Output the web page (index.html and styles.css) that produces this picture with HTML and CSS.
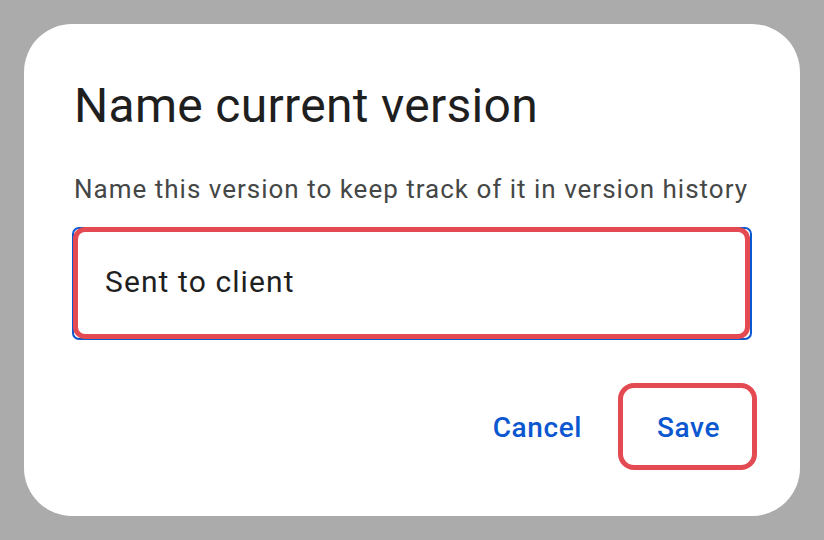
FILE: index.html
```html
<!DOCTYPE html>
<html lang="en">
<head>
<meta charset="utf-8">
<title>Name current version</title>
<link rel="stylesheet" href="styles.css">
</head>
<body>
  <div class="dialog">
    <h1 class="title">Name current version</h1>
    <p class="subtitle">Name this version to keep track of it in version history</p>
    <div class="field">
      <div class="field-value">Sent to client</div>
      <span class="mark mark-field"></span>
    </div>
    <div class="actions">
      <button class="btn">Cancel</button>
      <button class="btn btn-save">Save<span class="mark mark-save"></span></button>
    </div>
  </div>
</body>
</html>
```

FILE: styles.css
```css
* { box-sizing: border-box; }
html, body { margin: 0; padding: 0; }
body {
  width: 824px;
  height: 540px;
  background: #ababab;
  padding: 24px;
  font-family: Roboto, "Liberation Sans", sans-serif;
}
.dialog {
  width: 776px;
  height: 492px;
  background: #ffffff;
  border-radius: 48px;
  padding: 56px 48px 0 48px;
  display: flex;
  flex-direction: column;
}
.title {
  margin: 0;
  font-size: 48px;
  line-height: 52px;
  font-weight: 400;
  letter-spacing: 0.3px;
  color: #1f1f1f;
  padding-left: 2px;
}
.subtitle {
  margin: 41px 0 0 0;
  font-size: 26px;
  line-height: 32px;
  letter-spacing: 1px;
  color: #444746;
  padding-left: 2px;
  white-space: nowrap;
}
.field {
  position: relative;
  margin-top: 22px;
  height: 113px;
  border: 2px solid #0b57d0;
  border-radius: 7px;
  display: flex;
  align-items: center;
  padding-left: 31px;
}
.field-value {
  font-size: 30px;
  letter-spacing: 1.1px;
  color: #1f1f1f;
  margin-top: -4px;
}
.mark {
  position: absolute;
  border: 5px solid #e34a52;
  pointer-events: none;
}
.mark-field {
  left: -1px;
  right: 0;
  top: -2px;
  bottom: -1px;
  border-radius: 12px;
}
.actions {
  margin-top: 47px;
  display: flex;
  justify-content: flex-end;
  gap: 5px;
}
.btn {
  position: relative;
  height: 80px;
  padding: 0 34px;
  border: none;
  background: transparent;
  font-family: Roboto, "Liberation Sans", sans-serif;
  font-size: 28px;
  font-weight: 500;
  letter-spacing: 0.6px;
  color: #0b57d0;
}
.btn-save {
  padding: 0 32px 0 36px;
}
.mark-save {
  left: -3px;
  right: -5px;
  top: -4px;
  bottom: -3px;
  border-radius: 16px;
}
```
